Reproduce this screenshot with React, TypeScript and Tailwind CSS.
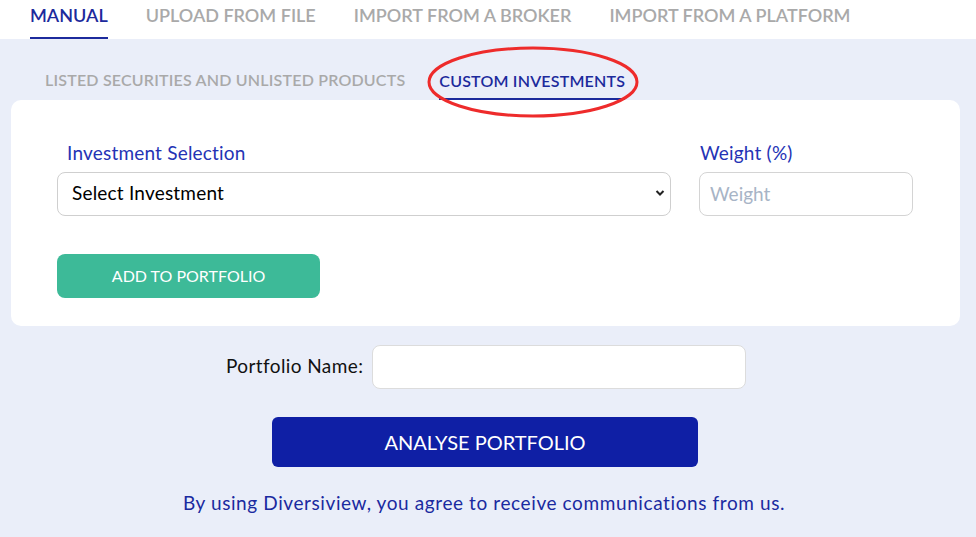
import React from "react";

const font = { fontFamily: "Lato, 'Open Sans', sans-serif" };

export default function App() {
  const tabs = ["MANUAL", "UPLOAD FROM FILE", "IMPORT FROM A BROKER", "IMPORT FROM A PLATFORM"];

  return (
    <div className="relative w-[976px] h-[537px] overflow-hidden bg-[#eaeef9]" style={font}>
      {/* top tabs */}
      <div className="flex h-[39px] items-stretch gap-[38px] bg-white pl-[30px]">
        {tabs.map((t, i) => (
          <div
            key={t}
            className={
              i === 0
                ? "flex items-center border-b-2 border-[#1c2a9c] pb-[6px] text-[18px] font-semibold text-[#1c2a9c]"
                : "flex items-center pb-[8px] text-[18px] font-semibold text-[#a9a9a9]"
            }
          >
            {t}
          </div>
        ))}
      </div>

      {/* sub tabs */}
      <div className="flex h-[61px] items-end gap-[34px] pl-[45px] tracking-[0.2px]">
        <div className="pb-[8px] text-[16px] font-semibold text-[#a9a9a9]">
          LISTED SECURITIES AND UNLISTED PRODUCTS
        </div>
        <div className="border-b-2 border-[#1c2a9c] pb-[5px] text-[16px] font-semibold text-[#1c2a9c]">
          CUSTOM INVESTMENTS
        </div>
      </div>

      {/* card */}
      <div className="ml-[11px] w-[949px] rounded-[10px] bg-white pl-[46px] pr-[47px] pt-[39px] pb-[28px]">
        <div className="flex gap-[28px]">
          <div className="w-[614px]">
            <div className="mb-[4px] pl-[10px] text-[19px] tracking-[0.2px] text-[#2433b5]">Investment Selection</div>
            <div className="relative">
              <div className="flex h-[44px] items-center rounded-[8px] border border-[#cfcfcf] pl-[14px] text-[19px] tracking-[0.2px] text-black">
                Select Investment
              </div>
              <svg className="absolute right-[6px] top-[17px]" width="10" height="8" viewBox="0 0 10 8">
                <path d="M1.5 2 L5 5.5 L8.5 2" fill="none" stroke="#222" strokeWidth="2" />
              </svg>
            </div>
          </div>
          <div className="w-[214px]">
            <div className="mb-[4px] pl-[1px] text-[19px] tracking-[0.2px] text-[#2433b5]">Weight (%)</div>
            <input
              placeholder="Weight"
              className="h-[44px] w-full rounded-[8px] border border-[#d4d4d4] pl-[10px] text-[19px] outline-none placeholder:text-[#a7b4c6]"
              style={font}
            />
          </div>
        </div>
        <button className="mt-[38px] h-[44px] w-[263px] rounded-[8px] bg-[#3dba98] text-[16px] text-white" style={font}>
          ADD TO PORTFOLIO
        </button>
      </div>

      {/* portfolio name */}
      <div className="mt-[19px] flex items-center pl-[226px]">
        <span className="w-[146px] text-[19px] tracking-[0.4px] text-[#111]">Portfolio Name:</span>
        <input className="h-[44px] w-[374px] rounded-[8px] border border-[#dcdcdc] bg-white outline-none" />
      </div>

      <div className="mt-[28px] flex pl-[272px]">
        <button className="h-[50px] w-[426px] rounded-[6px] bg-[#0f1fa5] text-[20px] text-white" style={font}>
          ANALYSE PORTFOLIO
        </button>
      </div>

      <div className="mt-[22px] pr-[8px] text-center text-[19px] tracking-[0.6px] text-[#1a2aa0]">
        By using Diversiview, you agree to receive communications from us.
      </div>

      {/* annotation ellipse */}
      <svg className="absolute left-[426px] top-[45px]" width="214" height="74" viewBox="0 0 214 74">
        <ellipse cx="107" cy="37" rx="104" ry="34" fill="none" stroke="#ee2b2b" strokeWidth="3" />
      </svg>
    </div>
  );
}
